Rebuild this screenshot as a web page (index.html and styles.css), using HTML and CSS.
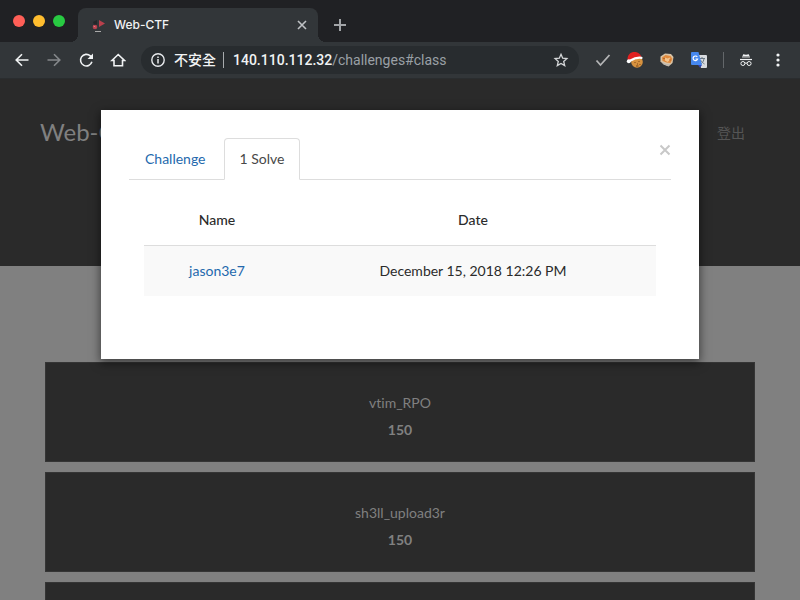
FILE: index.html
```html
<!DOCTYPE html>
<html lang="zh-Hant">
<head>
<meta charset="utf-8">
<meta name="viewport" content="width=device-width, initial-scale=1">
<title>Web-CTF</title>
<link rel="stylesheet" href="styles.css">
</head>
<body>
<div class="browser">
  <header class="tabstrip">
    <div class="lights">
      <button class="light red" aria-label="Close window"></button>
      <button class="light yellow" aria-label="Minimize"></button>
      <button class="light green" aria-label="Zoom"></button>
    </div>
    <div class="tab">
      <svg class="favicon" viewBox="0 0 16 16" aria-hidden="true">
        <path d="M9 3l6 3.500-6 3.500z" fill="#b8404c"/>
        <circle cx="5" cy="10" r="2.300" fill="#b8404c"/>
        <path d="M3.500 9l2 1" stroke="#e07c84"/>
        <path d="M3 5l4-2v4.500H4z" fill="#25272a"/>
        <path d="M5 14.500h6" stroke="#aaa" stroke-width="1"/>
      </svg>
      <span class="tab-title">Web-CTF</span>
      <button class="icon-button" aria-label="Close tab">
        <svg width="10" height="10" viewBox="0 0 10 10"><path d="M1 1l8 8M9 1L1 9" stroke="#bfc2c5" stroke-width="1.600"/></svg>
      </button>
    </div>
    <button class="icon-button new-tab" aria-label="New tab">
      <svg width="12" height="12" viewBox="0 0 12 12"><path d="M6 0v12M0 6h12" stroke="#a2a5a8" stroke-width="2"/></svg>
    </button>
  </header>
  <div class="toolbar">
    <nav class="nav-buttons" aria-label="Browser">
      <button class="icon-button" aria-label="Back"><svg width="16" height="16" viewBox="0 0 16 16"><path d="M14.500 8H2.500M8 2.200L2.200 8 8 13.800" fill="none" stroke="#f1f3f4" stroke-width="1.600"/></svg></button>
      <button class="icon-button" aria-label="Forward"><svg width="16" height="16" viewBox="0 0 16 16"><path d="M1.500 8h12M8 2.200L13.800 8 8 13.800" fill="none" stroke="#85888b" stroke-width="1.600"/></svg></button>
      <button class="icon-button" aria-label="Reload"><svg width="16" height="16" viewBox="0 0 16 16"><path d="M13.900 9.800A5.800 5.800 0 1 1 12.300 3.900L13.800 5.400" fill="none" stroke="#f1f3f4" stroke-width="1.600"/><path d="M15 1.500v5.500H9.500z" fill="#f1f3f4"/></svg></button>
      <button class="icon-button" aria-label="Home"><svg width="16" height="16" viewBox="0 0 16 16"><path d="M2 8.500h2v5.300h8.500V8.500h2L8.200 2.500z" fill="none" stroke="#f1f3f4" stroke-width="1.600"/></svg></button>
    </nav>
    <div class="address">
      <svg width="14" height="14" viewBox="0 0 14 14" aria-hidden="true"><circle cx="7" cy="7" r="6.200" fill="none" stroke="#e8eaed" stroke-width="1.400"/><path d="M7 6v4.500M7 3.400v1.500" stroke="#e8eaed" stroke-width="1.500"/></svg>
      <span class="insecure">不安全</span>
      <span class="address-line"></span>
      <span class="url"><b>140.110.112.32</b>/challenges#class</span>
      <button class="icon-button" aria-label="Bookmark"><svg width="16" height="16" viewBox="0 0 16 16"><path d="M8 2.300l1.700 3.900 4.200.4-3.200 2.800 1 4.200L8 11.400l-3.700 2.200 1-4.200-3.200-2.800 4.200-.4z" fill="none" stroke="#d4d6d8" stroke-width="1.300"/></svg></button>
    </div>
    <div class="extensions">
      <button class="icon-button" aria-label="Check"><svg width="16" height="16" viewBox="0 0 16 16"><path d="M1.500 8.500l4 4.500L14.500 3" fill="none" stroke="#b4b5b6" stroke-width="1.800"/></svg></button>
      <button class="icon-button" aria-label="Cookies">
        <svg width="18" height="18" viewBox="0 0 18 18"><circle cx="11" cy="11" r="5.800" fill="#d6923f"/><path d="M9 11v1M13 10v1M11.500 12.500v1M14 13v1M10 15h2.500" stroke="#7c4617"/><path d="M1.500 8.500C1.500 3.500 4.500 1 8.500 1S15 3.500 15.500 6.500L4 10z" fill="#e02020"/><path d="M4.500 9.500Q10 6 15.500 6.800" fill="none" stroke="#fff" stroke-width="2.200" stroke-linecap="round"/><circle cx="2.800" cy="10.300" r="2" fill="#fff"/></svg>
      </button>
      <button class="icon-button" aria-label="Fox">
        <svg width="16" height="16" viewBox="0 0 16 16"><path d="M1.500 4.500L6 1.500l6 .5 2.500 3-1 6-4 3.500-5-2-3-3z" fill="#d9c3a5"/><path d="M3 5.500L6.500 3l5 1 2 3-2 4-4-.5-4-1.500z" fill="#e18a3c"/><path d="M2.500 9.500l4 2.500 5 .500-2.500 1.500-4-1.500z" fill="#b9b7b4"/><path d="M6 5.500l2.500 1L11 5.500l-.5 3-2 1.500L6 8.500z" fill="#f4c48c"/><path d="M4.500 6.500h1M10.500 8h1" stroke="#7c4a2a"/></svg>
      </button>
      <button class="icon-button" aria-label="Translate">
        <svg width="18" height="18" viewBox="0 0 18 18"><path d="M7 4h9q1 0 1 1v11q0 1-1 1h-5z" fill="#d8dbdf"/><path d="M9 7.500h6M12 6v1.500M14 8c-.5 3-2.500 4.500-4 5.500M10.500 9c1 2 2.500 3 4 4" fill="none" stroke="#697783"/><path d="M2 1h6.500L12 14H2q-1 0-1-1V2q0-1 1-1z" fill="#4688ef"/><path d="M8 14h4l-2 2.800z" fill="#3045b8"/><path d="M7.300 6A2.300 2.300 0 1 0 7.600 8H5.500" fill="none" stroke="#fff" stroke-width="1.200"/></svg>
      </button>
    </div>
    <span class="divider"></span>
    <div class="menus">
      <svg width="14" height="16" viewBox="0 0 14 16" role="img" aria-label="Incognito"><path d="M3 5.500L4.200 2.200 7 2.700l2.800-.5L11 5.500z" fill="#f1f3f4"/><path d="M3.500 4.800h7" stroke="#323639" stroke-width=".6"/><path d="M1 7.500h12" stroke="#f1f3f4" stroke-width="1.200"/><circle cx="3.900" cy="11.500" r="2" fill="none" stroke="#f1f3f4"/><circle cx="10.100" cy="11.500" r="2" fill="none" stroke="#f1f3f4"/><path d="M5.900 11.300q1.100-.8 2.200 0" fill="none" stroke="#f1f3f4"/></svg>
      <button class="icon-button" aria-label="Menu"><svg width="4" height="16" viewBox="0 0 4 16"><g fill="#f1f3f4"><circle cx="2" cy="3" r="1.600"/><circle cx="2" cy="8" r="1.600"/><circle cx="2" cy="13" r="1.600"/></g></svg></button>
    </div>
  </div>
  <div class="viewport">
    <div class="page">
      <div class="banner">
        <a class="brand" href="#">Web-CTF</a>
        <a class="logout" href="#logout">登出</a>
      </div>
      <main class="cards">
        <button class="card"><span>vtim_RPO</span><strong>150</strong></button>
        <button class="card"><span>sh3ll_upload3r</span><strong>150</strong></button>
        <button class="card" aria-label="Challenge"></button>
      </main>
    </div>
    <section class="modal" role="dialog" aria-label="Solves">
      <button class="close" aria-label="Close"><svg width="12" height="12" viewBox="0 0 12 12"><path d="M1.500 1.500l9 9M10.500 1.500l-9 9" stroke="#c8c8c8" stroke-width="2"/></svg></button>
      <nav class="tabs">
        <a class="tab-link" href="#challenge">Challenge</a>
        <a class="tab-link active" href="#solves">1 Solve</a>
      </nav>
      <div class="table-wrap">
        <table class="solves">
          <thead><tr><th class="name">Name</th><th>Date</th></tr></thead>
          <tbody><tr><td><a href="#jason3e7">jason3e7</a></td><td>December 15, 2018 12:26 PM</td></tr></tbody>
        </table>
      </div>
    </section>
  </div>
</div>
</body>
</html>
```
FILE: styles.css
```css
* { box-sizing: border-box; }
body {
  margin: 0;
  background: #222;
  font: 14px/20px Lato, "Noto Sans CJK TC", sans-serif;
  font-variant-ligatures: none;
  color: #2b2b2b;
}
button { border: 0; padding: 0; background: none; font: inherit; color: inherit; }
a { text-decoration: none; }
svg { display: block; flex: none; }
.icon-button { display: flex; flex: none; }

.browser { display: flex; flex-direction: column; height: 100vh; overflow: hidden; }

/* Tab strip */
.tabstrip {
  display: flex;
  align-items: center;
  height: 42px;
  flex: none;
  padding-left: 13px;
  background: #202124;
  font-family: Inter, sans-serif;
}
.lights { display: flex; gap: 8px; width: 65px; }
.light { width: 12px; height: 12px; border-radius: 50%; }
.red { background: #ff5f57; }
.yellow { background: #ffbd2e; }
.green { background: #28ca42; }
.tab {
  position: relative;
  display: flex;
  align-items: center;
  align-self: flex-end;
  width: 240px;
  height: 34px;
  padding: 0 11px 0 12px;
  border-radius: 8px 8px 0 0;
  background: #323639;
}
.tab::before, .tab::after {
  content: "";
  position: absolute;
  bottom: 0;
  width: 8px;
  height: 8px;
}
.tab::before { left: -8px; background: radial-gradient(circle at 0 0, #202124 8px, #323639 8px); }
.tab::after { right: -8px; background: radial-gradient(circle at 100% 0, #202124 8px, #323639 8px); }
.favicon { width: 16px; height: 16px; margin-right: 8px; }
.tab-title { flex: 1; font-size: 12px; font-weight: 500; color: #f1f3f4; }
.new-tab { margin: 8px 0 0 16px; }

/* Toolbar */
.toolbar {
  display: flex;
  align-items: center;
  height: 37px;
  flex: none;
  padding: 0 20px 0 14px;
  background: #323639;
  border-bottom: 1px solid #2a2d2f;
}
.nav-buttons { display: flex; gap: 16px; }
.address {
  display: flex;
  align-items: center;
  flex: 1;
  height: 28px;
  margin-left: 15px;
  padding: 0 10px;
  border-radius: 14px;
  background: #282c2f;
  color: #f1f3f4;
  font-family: Roboto, "Noto Sans CJK TC", sans-serif;
}
.insecure { margin-left: 9px; font-weight: 500; }
.address-line { width: 1px; height: 16px; margin: 0 9px 0 7px; background: #a8abad; }
.url { flex: 1; color: #9aa0a6; }
.url b { font-weight: 500; color: #f1f3f4; }
.extensions { display: flex; align-items: center; gap: 15px; margin-left: 16px; }
.divider { width: 1px; height: 16px; margin: 0 15px; background: #63676a; }
.menus { display: flex; align-items: center; gap: 23px; }

/* Page under the dialog */
.viewport { position: relative; flex: 1; min-height: 0; overflow: hidden; }
.page { height: 100%; background: #808080; }
.banner {
  display: flex;
  justify-content: space-between;
  align-items: flex-start;
  height: 187px;
  padding: 39px 55px 0 40px;
  background: #2a2a2a;
}
.brand { font-size: 24px; line-height: 28px; color: #808080; }
.logout { padding-top: 5px; color: #555; }
.cards { display: grid; gap: 10px; padding: 96px 45px 0; }
.card {
  display: flex;
  flex-direction: column;
  align-items: center;
  justify-content: center;
  gap: 7px;
  height: 100px;
  padding-top: 9px;
  background: #2a2a2a;
  color: #808080;
  border: 1px solid #353535;
}

/* Dialog */
.modal {
  position: absolute;
  top: 31px;
  left: 101px;
  right: 101px;
  padding: 28px 28px 63px;
  background: #fff;
  box-shadow: 0 3px 9px 1px rgba(0, 0, 0, .5);
}
.close { position: absolute; top: 34px; right: 28px; }
.tabs { display: flex; gap: 2px; border-bottom: 1px solid #ddd; }
.tab-link {
  padding: 10px 15px;
  margin-bottom: -1px;
  border: 1px solid transparent;
  border-radius: 4px 4px 0 0;
  color: #2469ad;
}
.tab-link.active { border-color: #ddd; border-bottom-color: #fff; background: #fff; color: #484848; }
.table-wrap { padding: 15px 15px 0; }
.solves { width: 100%; border-collapse: collapse; text-align: center; }
.solves th, .solves td { padding: 15px; }
.solves th { font-weight: 500; border-bottom: 1px solid #ddd; }
.solves .name { width: 146px; }
.solves tbody tr { background: #f9f9f9; }
.solves a { color: #2469ad; }
```
